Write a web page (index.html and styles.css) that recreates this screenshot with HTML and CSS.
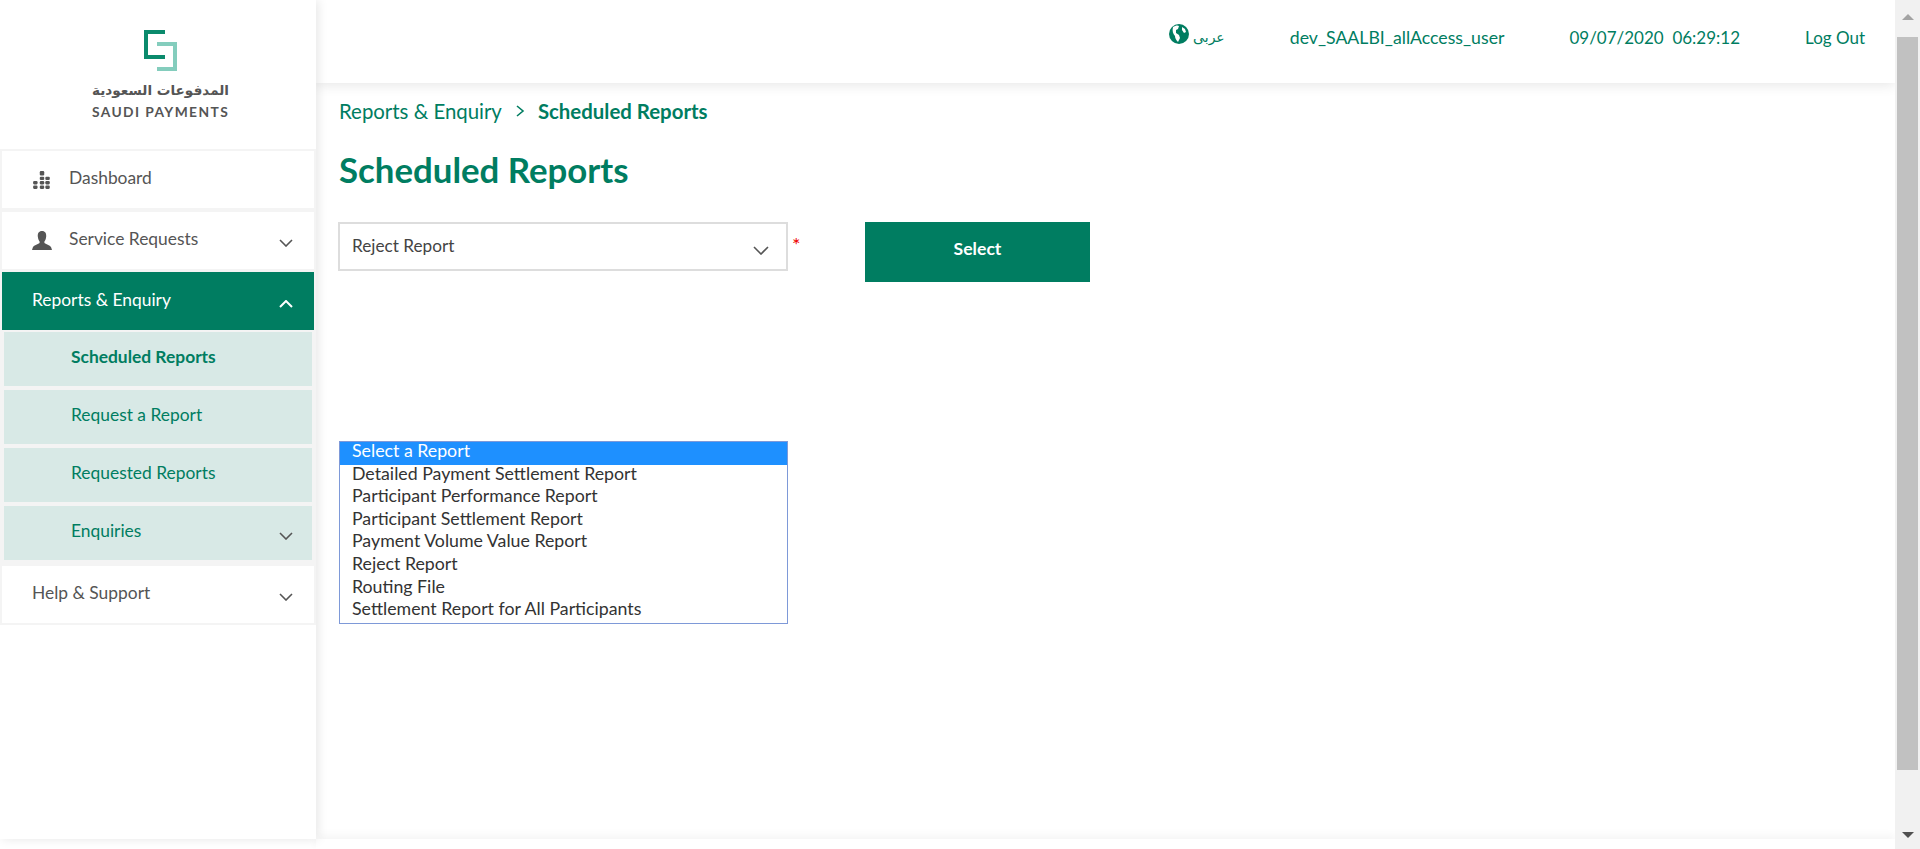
FILE: index.html
```html
<!DOCTYPE html>
<html lang="en">
<head>
  <meta charset="UTF-8">
  <title>Scheduled Reports</title>
  <link rel="stylesheet" href="styles.css">
</head>
<body>
  <div class="page">
    <aside class="sidebar">
      <div class="logo">
        <svg class="logo-mark" width="34" height="42" viewBox="0 0 34 42">
          <path d="M21 2H2V27H21" fill="none" stroke="#0a8a6c" stroke-width="4"/>
          <path d="M13 14H31V39H13" fill="none" stroke="#84cdbd" stroke-width="4"/>
        </svg>
        <div class="logo-ar" lang="ar" dir="rtl">المدفوعات السعودية</div>
        <div class="logo-en">SAUDI PAYMENTS</div>
      </div>
      <nav class="menu">
        <a class="menu-item">
          <svg class="menu-icon" width="20" height="20" viewBox="0 0 18 18" fill="#555">
            <rect x="7" y="1" width="4" height="4" rx="1"/>
            <rect x="7" y="6" width="4" height="3" rx="1"/><rect x="12" y="6" width="4" height="3" rx="1"/>
            <rect x="1" y="10" width="4" height="3" rx="1"/><rect x="7" y="10" width="4" height="3" rx="1"/><rect x="12" y="10" width="4" height="3" rx="1"/>
            <rect x="1" y="14" width="4" height="3" rx="1"/><rect x="7" y="14" width="4" height="3" rx="1"/><rect x="12" y="14" width="4" height="3" rx="1"/>
          </svg>
          Dashboard
        </a>
        <a class="menu-item">
          <svg class="menu-icon" width="20" height="20" viewBox="0 0 20 20" fill="#555">
            <path d="M10 0C6.800 0 5.600 2.400 5.800 5.400 6 8 7 9.600 7.600 10.600V12C5.600 13.600 1.600 14.400 .8 16.400L0 19H20L19.200 16.400C18.400 14.400 14.400 13.600 12.400 12V10.600C13 9.600 14 8 14.200 5.400 14.400 2.400 13.200 0 10 0Z"/>
          </svg>
          Service Requests
          <svg class="chevron" width="14" height="8" viewBox="0 0 14 8"><path d="M1 1L7 7L13 1"/></svg>
        </a>
        <a class="menu-item active">
          Reports &amp; Enquiry
          <svg class="chevron up" width="14" height="8" viewBox="0 0 14 8"><path d="M1 7L7 1L13 7"/></svg>
        </a>
        <a class="sub-item current">Scheduled Reports</a>
        <a class="sub-item">Request a Report</a>
        <a class="sub-item">Requested Reports</a>
        <a class="sub-item">Enquiries
          <svg class="chevron" width="14" height="8" viewBox="0 0 14 8"><path d="M1 1L7 7L13 1"/></svg>
        </a>
        <a class="menu-item help">
          Help &amp; Support
          <svg class="chevron" width="14" height="8" viewBox="0 0 14 8"><path d="M1 1L7 7L13 1"/></svg>
        </a>
      </nav>
    </aside>

    <div class="main">
      <header class="topbar">
        <span class="lang">
          <svg width="20" height="20" viewBox="0 0 20 20">
            <circle cx="10" cy="10" r="10" fill="#007d61"/>
            <path d="M4 3C6 1.500 9 1 10 2L9 5 7 6 7 9 10 11 11 14 9 18C7 16 6 14 6 12 4 10 3 7 4 3ZM13 3L16 5 17 8 15 9 13 6Z" fill="#fff"/>
          </svg>
          <span lang="ar" class="lang-text">عربى</span>
        </span>
        <span class="user">dev_SAALBI_allAccess_user</span>
        <span>09/07/2020&nbsp;&nbsp;06:29:12</span>
        <span>Log Out</span>
      </header>

      <section class="content">
        <div class="crumbs">
          <span>Reports &amp; Enquiry</span>
          <svg width="10" height="14" viewBox="0 0 10 14"><path d="M2 2L8 7L2 12"/></svg>
          <b>Scheduled Reports</b>
        </div>
        <h1>Scheduled Reports</h1>

        <div class="form-row">
          <div class="select-box">
            Reject Report
            <svg class="chevron" width="16" height="9" viewBox="0 0 16 9"><path d="M1 1L8 8L15 1"/></svg>
          </div>
          <span class="required">*</span>
          <button class="select-btn" type="button">Select</button>
        </div>

        <ul class="report-list">
          <li class="picked">Select a Report</li>
          <li>Detailed Payment Settlement Report</li>
          <li>Participant Performance Report</li>
          <li>Participant Settlement Report</li>
          <li>Payment Volume Value Report</li>
          <li>Reject Report</li>
          <li>Routing File</li>
          <li>Settlement Report for All Participants</li>
        </ul>
      </section>

      <div class="bottom-strip"></div>
    </div>

    <div class="scrollbar">
      <span class="arrow-up"></span>
      <div class="thumb"></div>
      <span class="arrow-down"></span>
    </div>
  </div>
</body>
</html>
```

FILE: styles.css
```css
* {
  margin: 0;
  padding: 0;
  box-sizing: border-box;
  font-family: 'Lato', 'DejaVu Sans', sans-serif;
}

html, body {
  height: 100%;
  overflow: hidden;
  background: #fff;
}

.page {
  display: flex;
  height: 849px;
}

/* sidebar */
.sidebar {
  width: 316px;
  height: 839px;
  flex-shrink: 0;
  background: #fff;
  box-shadow: 2px 0 10px rgba(0, 0, 0, 0.1);
  position: relative;
  z-index: 2;
}

.logo {
  height: 149px;
  padding: 30px 0 0 5px;
  display: flex;
  flex-direction: column;
  align-items: center;
}

.logo-mark {
  margin-bottom: 8px;
}

.logo-ar {
  font-family: 'DejaVu Sans', sans-serif;
  font-size: 13.6px;
  font-weight: bold;
  line-height: 20px;
  color: #555;
}

.logo-en {
  font-size: 13.8px;
  font-weight: bold;
  letter-spacing: 1.4px;
  line-height: 20px;
  margin-top: 2px;
  color: #555;
}

.menu {
  background: #f4f4f4;
  padding: 2px 2px 2px;
  display: flex;
  flex-direction: column;
}

.menu-item {
  height: 57px;
  margin-bottom: 4px;
  padding: 0 0 5px 30px;
  display: flex;
  align-items: center;
  background: #fff;
  color: #555;
  font-size: 17.4px;
}

.menu-icon {
  margin: 5px 17px 0 0;
  flex-shrink: 0;
}

.chevron {
  margin-left: auto;
  margin-right: 21px;
  margin-top: 10px;
  fill: none;
  stroke: #555;
  stroke-width: 1.6;
}

.menu-item.active {
  height: 58px;
  margin-top: -1px;
  margin-bottom: 2px;
  padding-bottom: 3px;
  background: #007d61;
  color: #fff;
}

.menu-item.active .chevron {
  margin-top: 8px;
  stroke: #fff;
  stroke-width: 2;
}

.sub-item {
  height: 54px;
  margin: 0 2px 4px;
  padding: 0 0 5px 67px;
  display: flex;
  align-items: center;
  background: #d8e9e6;
  color: #007d61;
  font-size: 17.4px;
}

.sub-item .chevron {
  margin-right: 19px;
}

.sub-item.current {
  font-weight: bold;
}

.menu-item.help {
  margin-top: 2px;
  margin-bottom: 0;
}

/* main */
.main {
  flex: 1;
  min-width: 0;
  display: flex;
  flex-direction: column;
}

.topbar {
  height: 83px;
  padding: 27px 30px 0 0;
  display: flex;
  justify-content: flex-end;
  align-items: flex-start;
  gap: 65px;
  box-shadow: 0 2px 12px rgba(0, 0, 0, 0.1);
  color: #007d61;
  font-size: 17px;
}

.user {
  font-size: 17.7px;
}

.lang {
  display: flex;
  align-items: flex-start;
  gap: 4px;
  margin-top: -3px;
}

.lang-text {
  font-family: 'DejaVu Sans', sans-serif;
  font-size: 14px;
  margin-top: 5px;
}

.content {
  flex: 1;
  padding: 16px 0 0 22px;
  color: #007d61;
}

.crumbs {
  display: flex;
  align-items: center;
  gap: 13px;
  margin-left: 1px;
  font-size: 20.4px;
  line-height: 24px;
}

.crumbs svg {
  fill: none;
  stroke: #007d61;
  stroke-width: 1.6;
}

h1 {
  margin: 26px 0 0 1px;
  font-size: 34.8px;
  line-height: 42px;
}

.form-row {
  display: flex;
  align-items: flex-start;
  margin-top: 31px;
}

.select-box {
  width: 450px;
  height: 49px;
  padding: 0 0 3px 12px;
  display: flex;
  align-items: center;
  border: 2px solid #ddd;
  background: #fff;
  color: #444;
  font-size: 17.2px;
}

.select-box .chevron {
  margin-top: 10px;
  margin-right: 17px;
}

.required {
  width: 77px;
  padding: 10px 0 0 4px;
  color: #e00;
  font-size: 20px;
}

.select-btn {
  width: 225px;
  height: 60px;
  padding-bottom: 7px;
  border: none;
  background: #007d61;
  color: #fff;
  font-size: 17.6px;
  font-weight: bold;
}

.report-list {
  list-style: none;
  width: 449px;
  margin: 159px 0 0 1px;
  border: 1px solid #7e99d8;
  color: #333;
  font-size: 17.75px;
  line-height: 16px;
}

.report-list li {
  padding: 0 0 6.6px 12px;
}

.report-list .picked {
  background: #1e90ff;
  color: #fff;
}

.bottom-strip {
  height: 10px;
  flex-shrink: 0;
  background: #fff;
  box-shadow: 0 -3px 10px rgba(0, 0, 0, 0.05);
}

/* fake scrollbar */
.scrollbar {
  width: 25px;
  flex-shrink: 0;
  background: #f1f1f1;
  position: relative;
  z-index: 3;
}

.thumb {
  position: absolute;
  left: 2px;
  right: 2px;
  top: 37px;
  height: 733px;
  background: #c1c1c1;
}

.arrow-up, .arrow-down {
  position: absolute;
  left: 7px;
  width: 0;
  height: 0;
  border-left: 6px solid transparent;
  border-right: 6px solid transparent;
}

.arrow-up {
  top: 14px;
  border-bottom: 6px solid #a3a3a3;
}

.arrow-down {
  bottom: 11px;
  border-top: 6px solid #505050;
}
```
